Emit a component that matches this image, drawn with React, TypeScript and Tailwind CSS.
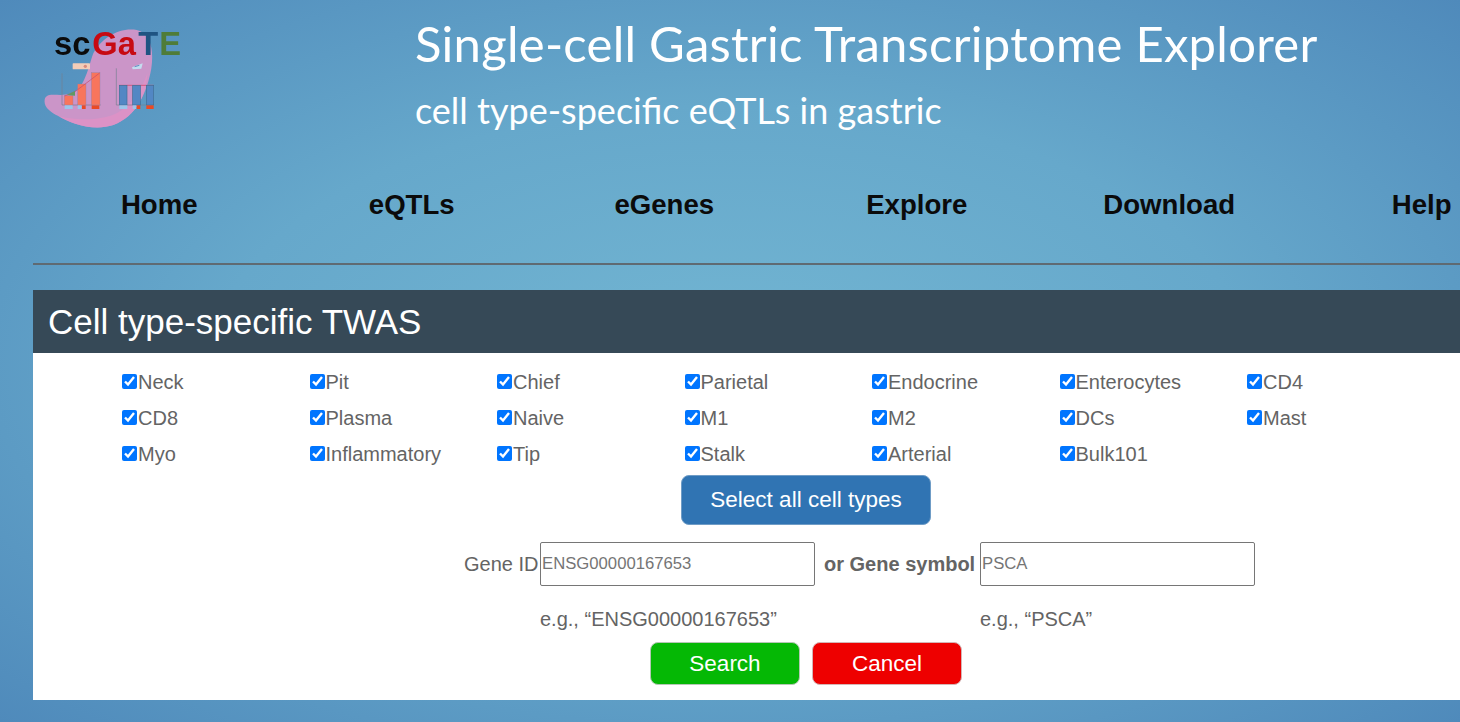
import React from 'react';

const cellTypes = [
    'Neck', 'Pit', 'Chief', 'Parietal', 'Endocrine', 'Enterocytes', 'CD4',
    'CD8', 'Plasma', 'Naive', 'M1', 'M2', 'DCs', 'Mast',
    'Myo', 'Inflammatory', 'Tip', 'Stalk', 'Arterial', 'Bulk101',
];

const navItems = ['Home', 'eQTLs', 'eGenes', 'Explore', 'Download', 'Help'];

function Logo() {
    return (
        <svg viewBox="0 0 510 390" className="w-[170px] h-[130px] shrink-0 -ml-[3px] blur-[0.4px]">
            {/* stomach */}
            <path d="M190 130 C215 85 265 52 320 60 C362 70 372 120 364 175 C352 245 320 320 250 345 C190 365 120 340 85 318 C60 305 38 290 45 265 C55 245 90 262 125 250 C165 235 175 170 190 130 Z" fill="#cb95c8" />
            <path d="M85 318 C130 330 210 335 260 310 C300 290 335 240 352 190 C350 250 320 320 250 345 C190 365 120 340 85 318 Z" fill="#dc92c6" />
            {/* left chart */}
            <rect x="128" y="160" width="52" height="18" rx="2" fill="#f3cdb8" />
            <circle cx="166" cy="169" r="5" fill="#d98a7c" />
            <path d="M96 190 V285 H212" fill="none" stroke="#76808f" strokeWidth="2" />
            <rect x="103" y="257" width="26" height="28" fill="#f8755c" stroke="#8a7fa8" strokeWidth="1" />
            <rect x="143" y="222" width="25" height="63" fill="#f8755c" stroke="#8a7fa8" strokeWidth="1" />
            <rect x="184" y="188" width="26" height="97" fill="#f8755c" stroke="#8a7fa8" strokeWidth="1" />
            <path d="M104 258 L135 245 L209 189" fill="none" stroke="#c9486a" strokeWidth="2" />
            <path d="M110 255 L135 243 V257 Z" fill="#5f9a63" />
            <rect x="104" y="286" width="24" height="11" fill="#9cc6ea" />
            <rect x="143" y="286" width="11" height="11" fill="#9cc6ea" />
            <rect x="156" y="286" width="11" height="11" fill="#ea4a25" />
            <rect x="185" y="286" width="23" height="11" fill="#ea4a25" />
            {/* right chart */}
            <path d="M306 172 L338 160 L334 176 L308 178 Z" fill="#c4dcef" />
            <path d="M314 170 L328 166" stroke="#5d8fc2" strokeWidth="3" />
            <path d="M259 175 V285 H372" fill="none" stroke="#76808f" strokeWidth="2" />
            <path d="M268 226 H371" stroke="#d0587f" strokeWidth="3" />
            <rect x="268" y="226" width="23" height="59" fill="#5287c4" stroke="#3f6f95" strokeWidth="2" />
            <rect x="308" y="226" width="23" height="59" fill="#5287c4" stroke="#3f6f95" strokeWidth="2" />
            <rect x="349" y="226" width="22" height="59" fill="#5287c4" stroke="#3f6f95" strokeWidth="2" />
            <rect x="268" y="286" width="24" height="11" fill="#9cc6ea" />
            <rect x="308" y="286" width="11" height="11" fill="#9cc6ea" />
            <rect x="320" y="286" width="11" height="11" fill="#ea4a25" />
            <rect x="349" y="286" width="22" height="11" fill="#ea4a25" />
            {/* wordmark */}
            <text y="135" fontFamily="'Liberation Sans', Arial, sans-serif" fontWeight="700" fontSize="98">
                <tspan x="72" fill="#0b0b0b">sc</tspan>
                <tspan x="187" fill="#c70a12">Ga</tspan>
                <tspan x="325" fill="#1f5482">T</tspan>
                <tspan x="388" fill="#4f7c38">E</tspan>
            </text>
        </svg>
    );
}

export default function App() {
    return (
        <div className="min-h-screen h-[722px] overflow-hidden pl-[33px] bg-[radial-gradient(#72b5d2_0%,#66a8cb_50%,#4f8abb_100%)] font-['Liberation_Sans',Arial,sans-serif]">
            <div className="w-[1515px]">
                {/* Header */}
                <div className="flex items-start h-[150px] pt-[10px]">
                    <Logo />
                    <div className="ml-[215px] text-white font-['Comic_Sans_MS','Lato',cursive]">
                        <h1 className="text-[49px] leading-[66px] tracking-[0.25px]">Single-cell Gastric Transcriptome Explorer</h1>
                        <h2 className="text-[36px] leading-[48px] mt-[10px]">cell type-specific eQTLs in gastric</h2>
                    </div>
                </div>

                {/* Nav */}
                <div className="grid grid-cols-6 h-[115px] border-b-2 border-[#5f6a72] pt-[38px]">
                    {navItems.map((item) => (
                        <div key={item} className="text-center text-[27.6px] leading-[34px] font-bold text-[#0b0b0b]">
                            {item}
                        </div>
                    ))}
                </div>

                {/* Panel */}
                <div className="mt-[25px] bg-white h-[410px]">
                    <div className="h-[63px] bg-[#364957] pl-[15px] text-white text-[35px] leading-[63px]">
                        Cell type-specific TWAS
                    </div>

                    <div className="pl-[89px] pt-[11px] grid grid-cols-[repeat(7,187.5px)] auto-rows-[36px] text-[20px] leading-[36px] text-[#646464]">
                        {cellTypes.map((name) => (
                            <label key={name} className="flex items-center">
                                <input type="checkbox" defaultChecked className="w-[15px] h-[15px] m-0 mr-px -mt-[2px]" />
                                {name}
                            </label>
                        ))}
                    </div>

                    <button className="block ml-[648px] mt-[3px] w-[250px] h-[50px] rounded-lg bg-[#3074b3] border border-[#6f9cc6] text-white text-[22.5px]">
                        Select all cell types
                    </button>

                    <div className="flex items-center mt-[17px] h-[44px] pl-[431px] text-[20px] text-[#646464]">
                        <span className="w-[76px]">Gene ID</span>
                        <input placeholder="ENSG00000167653" className="w-[275px] h-[44px] border border-[#767676] rounded-[2px] pl-px text-[16.7px] placeholder:text-[#757575]" />
                        <span className="ml-[9px] w-[156px] font-bold">or Gene symbol</span>
                        <input placeholder="PSCA" className="w-[275px] h-[44px] border border-[#767676] rounded-[2px] pl-px text-[16.7px] placeholder:text-[#757575]" />
                    </div>

                    <div className="flex mt-[19px] pl-[507px] text-[20px] leading-[28px] text-[#646464]">
                        <span className="w-[440px]">e.g., “ENSG00000167653”</span>
                        <span>e.g., “PSCA”</span>
                    </div>

                    <div className="flex gap-[12px] mt-[9px] pl-[617px]">
                        <button className="w-[150px] h-[43px] rounded-lg bg-[#05b805] border border-[#b5c8b5] text-white text-[22.5px]">Search</button>
                        <button className="w-[150px] h-[43px] rounded-lg bg-[#ee0000] border border-[#d5b5b5] text-white text-[22.5px]">Cancel</button>
                    </div>
                </div>
            </div>
        </div>
    );
}
